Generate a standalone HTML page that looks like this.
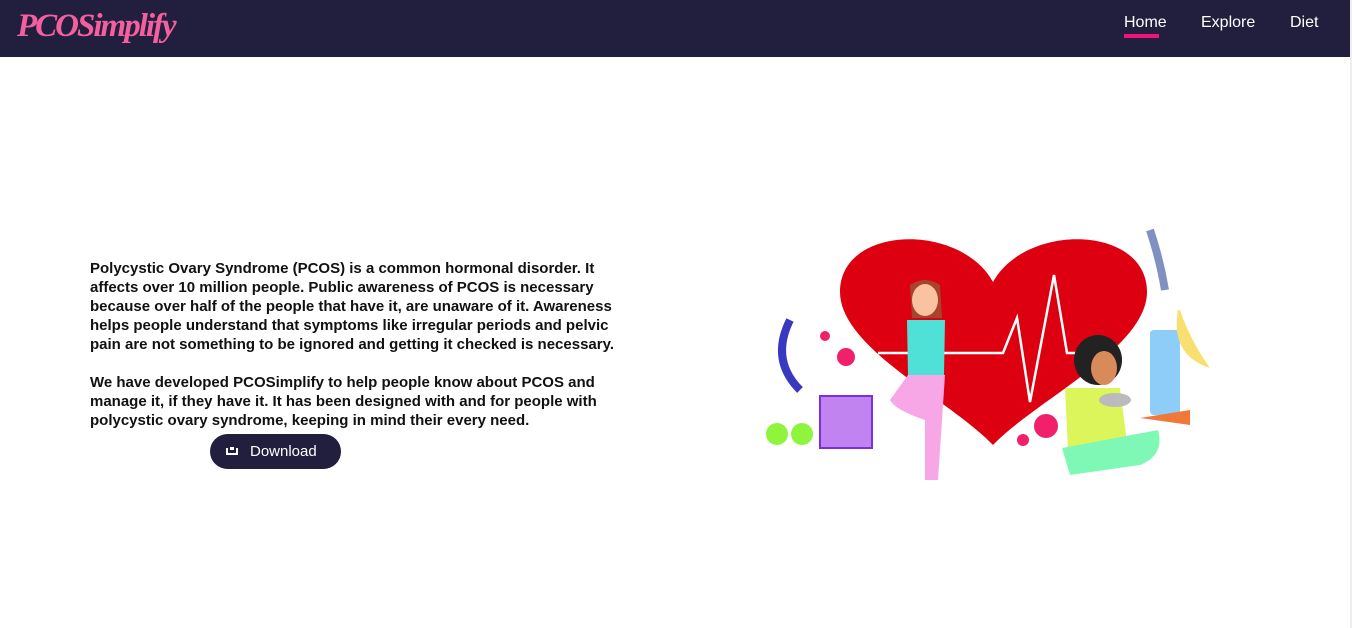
<!DOCTYPE html>
<html><head><meta charset="utf-8"><style>
*{margin:0;padding:0;box-sizing:border-box}
body{width:1352px;height:628px;background:#fff;position:relative;overflow:hidden;font-family:"Liberation Sans",sans-serif}
.nav{position:absolute;left:0;top:0;width:1350px;height:57px;background:#211f3d}
.logo{position:absolute;left:17px;top:8px;font-family:"Liberation Serif",serif;font-style:italic;font-weight:bold;font-size:33px;color:#f45fa0;letter-spacing:-2px}
.nav a{position:absolute;top:14px;color:#fff;font-size:16px;text-decoration:none;font-family:"Liberation Sans Narrow","Liberation Sans",sans-serif}
.ul{position:absolute;left:1124px;top:34px;width:35px;height:4px;background:#f0137e}
.txt{position:absolute;left:90px;top:259px;width:535px;font-weight:bold;font-size:15px;line-height:19px;color:#111}
.btn{position:absolute;left:210px;top:434px;width:131px;height:35px;border-radius:18px;background:#211f3d;color:#fff;font-size:15px;line-height:35px;padding-left:40px}
.ic{position:absolute;left:16px;top:14px;width:12px;height:7px;border:2px solid #fff;border-top:none}
.ic:after{content:"";position:absolute;left:2px;top:-1px;width:4px;height:3px;background:#fff}
.sb{position:absolute;left:1350px;top:0;width:2px;height:628px;background:#eee}
</style></head><body>
<div class="nav">
<div class="logo">PCOSimplify</div>
<a style="left:1124px">Home</a><div class="ul"></div>
<a style="left:1201px">Explore</a>
<a style="left:1290px">Diet</a>
</div>
<div class="sb"></div>
<div class="txt">Polycystic Ovary Syndrome (PCOS) is a common hormonal disorder. It affects over 10 million people. Public awareness of PCOS is necessary because over half of the people that have it, are unaware of it. Awareness helps people understand that symptoms like irregular periods and pelvic pain are not something to be ignored and getting it checked is necessary.<br><br>We have developed PCOSimplify to help people know about PCOS and manage it, if they have it. It has been designed with and for people with polycystic ovary syndrome, keeping in mind their every need.</div>
<div class="btn"><span class="ic"></span>Download</div>
<svg width="1352" height="628" style="position:absolute;left:0;top:0">
<path d="M993,282 C960,222 840,225 840,292 C840,348 950,400 993,445 C1036,400 1147,348 1147,292 C1147,225 1026,222 993,282Z" fill="#dd0010"/>
<polyline points="878,353 1003,353 1017,318 1030,402 1054,275 1067,353 1078,353" fill="none" stroke="#fff" stroke-width="2.5"/>
<path d="M910,285 Q925,275 940,285 L942,318 L912,318Z" fill="#a8432e"/>
<ellipse cx="925" cy="300" rx="13" ry="16" fill="#f9c3a2"/>
<path d="M907,320 L945,320 L944,375 L908,375Z" fill="#4fe0d8"/>
<path d="M908,375 L945,375 L938,480 L925,480 L925,420 Q895,410 890,400 Z" fill="#f7a7e6"/>
<ellipse cx="1098" cy="360" rx="24" ry="25" fill="#222"/>
<ellipse cx="1104" cy="368" rx="13" ry="17" fill="#d98a5a"/>
<path d="M1065,388 L1120,388 L1128,450 L1068,450Z" fill="#dcf55a"/>
<path d="M1062,448 L1158,430 Q1165,455 1140,465 L1070,475Z" fill="#7ff8b6"/>
<ellipse cx="1115" cy="400" rx="16" ry="7" fill="#bbb"/>
<rect x="1150" y="330" width="30" height="85" rx="4" fill="#8ecdf8"/>
<path d="M1178,310 Q1170,355 1210,368 Q1190,340 1180,310Z" fill="#f7e070"/>
<path d="M1140,418 L1190,410 L1190,425Z" fill="#f07838"/>
<rect x="820" y="396" width="52" height="52" fill="#c083f0" stroke="#7a2fe0" stroke-width="2"/>
<circle cx="777" cy="434" r="11" fill="#8ef53c"/><circle cx="802" cy="434" r="11" fill="#8ef53c"/>
<path d="M790,320 Q770,360 800,390" stroke="#3838c0" stroke-width="8" fill="none"/>
<path d="M1150,230 Q1160,260 1165,290" stroke="#8090c0" stroke-width="8" fill="none"/>
<circle cx="846" cy="357" r="9" fill="#f0206a"/><circle cx="1046" cy="426" r="12" fill="#f0206a"/>
<circle cx="825" cy="336" r="5" fill="#f0206a"/><circle cx="1023" cy="440" r="6" fill="#f0206a"/>
</svg>
</body></html>
